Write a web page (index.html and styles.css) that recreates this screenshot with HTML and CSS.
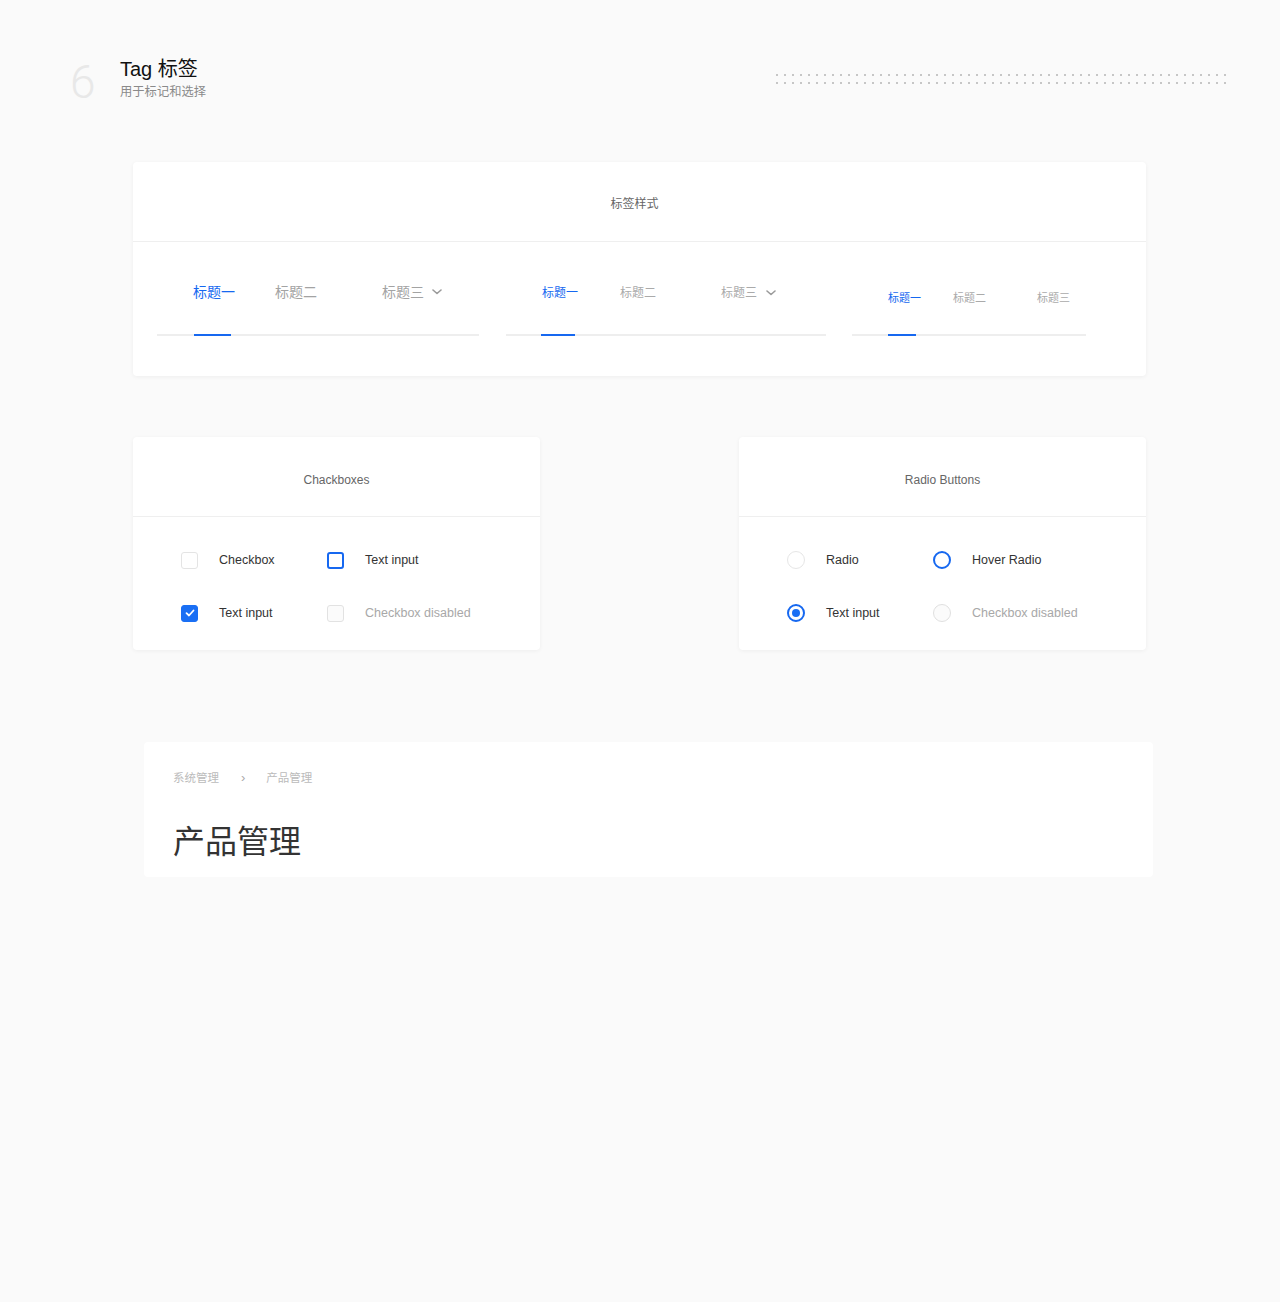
FILE: index.html
```html
<!DOCTYPE html>
<html lang="zh-CN">
<head>
<meta charset="utf-8">
<title>Tag 标签</title>
<link rel="stylesheet" href="styles.css">
</head>
<body>
<header class="page-head">
  <div class="sec-num">6</div>
  <div class="sec-title">
    <div class="sec-name">Tag 标签</div>
    <div class="sec-sub">用于标记和选择</div>
  </div>
  <div class="dots"></div>
</header>

<main class="content">
  <section class="card tab-card">
    <div class="card-head tab-head">标签样式</div>
    <div class="tab-body">
      <div class="tabs tabs-lg">
        <div class="tab tab-1 active"><span class="tab-label">标题一</span><span class="tab-bar"></span></div>
        <div class="tab tab-2"><span class="tab-label">标题二</span></div>
        <div class="tab tab-3"><span class="tab-label">标题三<svg class="chev" width="10" height="6" viewBox="0 0 10 6"><polyline points="1,1 5,4.5 9,1" fill="none" stroke="#9a9a9a" stroke-width="1.6" stroke-linecap="round" stroke-linejoin="round"/></svg></span></div>
      </div>
      <div class="tabs tabs-md">
        <div class="tab tab-1 active"><span class="tab-label">标题一</span><span class="tab-bar"></span></div>
        <div class="tab tab-2"><span class="tab-label">标题二</span></div>
        <div class="tab tab-3"><span class="tab-label">标题三<svg class="chev" width="10" height="6" viewBox="0 0 10 6"><polyline points="1,1 5,4.5 9,1" fill="none" stroke="#9a9a9a" stroke-width="1.6" stroke-linecap="round" stroke-linejoin="round"/></svg></span></div>
      </div>
      <div class="tabs tabs-sm">
        <div class="tab tab-1 active"><span class="tab-label">标题一</span><span class="tab-bar"></span></div>
        <div class="tab tab-2"><span class="tab-label">标题二</span></div>
        <div class="tab tab-3"><span class="tab-label">标题三</span></div>
      </div>
    </div>
  </section>

  <div class="pair">
    <section class="card small-card">
      <div class="card-head small-head">Chackboxes</div>
      <div class="opt-grid">
        <div class="opt"><span class="cb"></span><span class="opt-label">Checkbox</span></div>
        <div class="opt"><span class="cb cb-hover"></span><span class="opt-label">Text input</span></div>
        <div class="opt"><span class="cb cb-checked"><svg width="10" height="8" viewBox="0 0 10 8"><polyline points="1.5,4.2 4,6.5 8.5,1.5" fill="none" stroke="#fff" stroke-width="1.8" stroke-linecap="round" stroke-linejoin="round"/></svg></span><span class="opt-label">Text input</span></div>
        <div class="opt"><span class="cb cb-disabled"></span><span class="opt-label disabled">Checkbox disabled</span></div>
      </div>
    </section>
    <section class="card small-card">
      <div class="card-head small-head">Radio Buttons</div>
      <div class="opt-grid">
        <div class="opt"><span class="rd"></span><span class="opt-label">Radio</span></div>
        <div class="opt"><span class="rd rd-hover"></span><span class="opt-label">Hover Radio</span></div>
        <div class="opt"><span class="rd rd-checked"><span class="rd-dot"></span></span><span class="opt-label">Text input</span></div>
        <div class="opt"><span class="rd rd-disabled"></span><span class="opt-label disabled">Checkbox disabled</span></div>
      </div>
    </section>
  </div>

  <section class="crumb-card">
    <nav class="crumbs">
      <span>系统管理</span>
      <span class="sep">›</span>
      <span>产品管理</span>
    </nav>
    <h1 class="page-title">产品管理</h1>
  </section>
</main>
</body>
</html>
```

FILE: styles.css
```css
* { box-sizing: border-box; }

body {
  margin: 0;
  background: #fafafa;
  font-family: "Liberation Sans", "Noto Sans CJK SC", sans-serif;
  color: #333;
  min-height: 1302px;
}

.page-head {
  display: flex;
  align-items: flex-start;
  padding: 57px 51px 0 70px;
}

.sec-num {
  width: 50px;
  margin-top: 2px;
  font-family: Roboto, "Liberation Sans", sans-serif;
  font-weight: 300;
  font-size: 46px;
  line-height: 46px;
  color: #e8e8e8;
}

.sec-name {
  font-size: 20px;
  line-height: 24px;
  color: #111;
}

.sec-sub {
  margin-top: 3px;
  font-size: 12.3px;
  line-height: 16px;
  color: #8a8a8a;
}

.dots {
  margin-left: auto;
  margin-top: 14px;
  width: 456px;
  height: 16px;
  background-image: radial-gradient(circle at center, #c6c6c6 0, #c6c6c6 0.9px, rgba(198,198,198,0) 1.4px);
  background-size: 8px 8px;
}

.content {
  margin-left: 133px;
  width: 1013px;
  padding-top: 57px;
}

.card {
  background: #fff;
  border-radius: 4px;
  box-shadow: 0 1px 4px rgba(0, 0, 0, 0.05);
}

.card-head {
  height: 80px;
  padding-top: 2px;
  border-bottom: 1px solid #efefef;
  display: flex;
  align-items: center;
  justify-content: center;
  font-size: 12px;
  color: #666;
}

.tab-head { padding-right: 10px; }
.small-head { padding-top: 6px; }

/* Tabs */
.tab-body {
  display: flex;
  align-items: flex-end;
  padding: 0 0 40px 24px;
  height: 134px;
}

.tabs {
  display: flex;
  align-items: flex-end;
  border-bottom: 2px solid #eeeeee;
  padding-left: 36px;
}

.tabs-lg { width: 322px; }
.tabs-md { width: 320px; margin-left: 27px; }
.tabs-sm { width: 234px; margin-left: 26px; }

.tab {
  display: flex;
  flex-direction: column;
}

.tab-label {
  display: flex;
  align-items: center;
  white-space: nowrap;
  color: #a3a3a3;
}

.tab.active .tab-label { color: #1668f0; }

.tab-bar {
  height: 2px;
  margin-bottom: -2px;
  background: #1668f0;
}

.chev { margin-left: 8px; margin-top: -1px; }

.tabs-lg .tab-label { font-size: 14px; line-height: 20px; padding-bottom: 32px; }
.tabs-lg .tab-1 { width: 82px; }
.tabs-lg .tab-2 { width: 107px; }
.tabs-lg .tab-bar { width: 37px; margin-left: 1px; }

.tabs-md .tab-label { font-size: 12px; line-height: 20px; padding-bottom: 31px; color: #aaa; }
.tabs-md .tab.active .tab-label { color: #1668f0; }
.tabs-md .tab-1 { width: 78px; }
.tabs-md .tab-2 { width: 101px; }
.tabs-md .tab-bar { width: 34px; margin-left: -1px; }
.tabs-md .chev { margin-left: 9px; }

.tabs-sm .tab-label { font-size: 11px; line-height: 16px; padding-bottom: 28px; color: #aaa; }
.tabs-sm .tab.active .tab-label { color: #1668f0; }
.tabs-sm .tab-1 { width: 65px; }
.tabs-sm .tab-2 { width: 84px; }
.tabs-sm .tab-bar { width: 28px; }

/* Checkbox / radio cards */
.pair {
  display: flex;
  justify-content: space-between;
  margin-top: 61px;
}

.small-card { width: 407px; }

.opt-grid {
  display: grid;
  grid-template-columns: 146px auto;
  row-gap: 33px;
  padding: 33px 0 27px 48px;
}

.opt {
  display: flex;
  align-items: center;
  height: 20px;
}

.opt-label {
  font-size: 12.5px;
  color: #333;
  margin-left: 21px;
}

.opt-label.disabled { color: #a8a8a8; }

.cb {
  width: 17px;
  height: 17px;
  border: 1px solid #e4e4e4;
  border-radius: 3px;
  display: flex;
  align-items: center;
  justify-content: center;
  background: #fff;
}

.cb-hover { border: 2px solid #1668f0; }
.cb-checked { background: #1a6ff4; border-color: #1a6ff4; }
.cb-disabled { border-color: #e2e2e2; background: #fbfbfb; }

.rd {
  width: 18px;
  height: 18px;
  border: 1px solid #e6e6e6;
  border-radius: 50%;
  display: flex;
  align-items: center;
  justify-content: center;
  background: #fff;
}

.rd-hover { border: 2px solid #1668f0; }
.rd-checked { border: 2px solid #1668f0; }
.rd-dot {
  width: 8px;
  height: 8px;
  border-radius: 50%;
  background: #1a6ff4;
}
.rd-disabled { border: 1.5px solid #e0e0e0; background: #fbfbfb; }

/* Breadcrumb card */
.crumb-card {
  margin-top: 92px;
  margin-left: 11px;
  width: 1009px;
  background: #fff;
  border-radius: 4px;
  padding: 28px 0 15px 29px;
}

.crumbs {
  display: flex;
  align-items: center;
  font-size: 11.5px;
  line-height: 16px;
  color: #bbbbbb;
}

.crumbs .sep {
  margin: 0 21px 0 22px;
  font-size: 13px;
  color: #aaa;
}

.page-title {
  margin: 36px 0 0;
  font-size: 32px;
  line-height: 40px;
  font-weight: 400;
  color: #333;
}
```
